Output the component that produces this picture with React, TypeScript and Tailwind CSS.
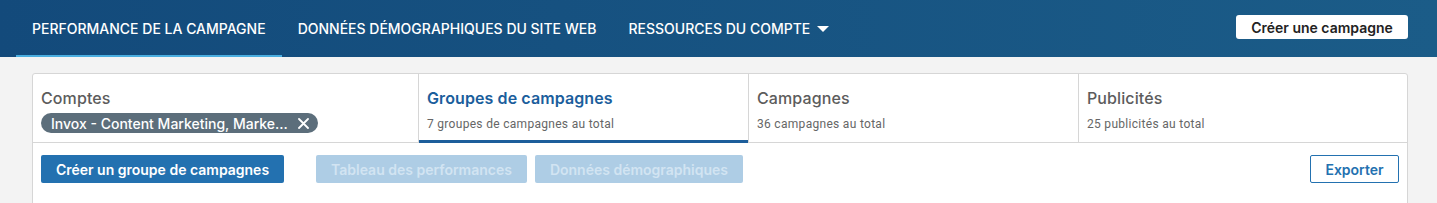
import React from "react";

const sans = { fontFamily: "Inter, 'Noto Sans', sans-serif" };

function Tab({
  title,
  sub,
  active,
  children,
  first,
}: {
  title: string;
  sub?: string;
  active?: boolean;
  children?: React.ReactNode;
  first?: boolean;
}) {
  return (
    <div
      className={`relative h-[69px] px-2 pt-[14px] border-b border-[#d6d6d6] ${first ? "" : "border-l"}`}
    >
      <div
        className={`text-[16px] leading-5 tracking-[0.1px] ${active ? "text-[#1b5e9c] font-semibold" : "text-[#5c5c5c] font-medium"}`}
      >
        {title}
      </div>
      {sub && (
        <div
          className="mt-[8px] text-[12px] leading-4 tracking-[0.3px] text-[#666666]"
          style={{ fontFamily: "Roboto, 'Noto Sans', sans-serif" }}
        >
          {sub}
        </div>
      )}
      {children}
      {active && <div className="absolute left-0 right-0 -bottom-px h-[3px] bg-[#1d5e9b]" />}
    </div>
  );
}

export default function App() {
  return (
    <div className="w-[1437px] h-[203px] overflow-hidden bg-[#f3f3f3]" style={sans}>
      <header className="h-[57px] flex items-stretch justify-between pl-4 pr-[29px] bg-gradient-to-r from-[#134a7b] to-[#1b5c88]">
        <nav className="flex items-stretch">
          <div className="relative flex items-center px-4 text-[14px] font-medium text-white">
            PERFORMANCE DE LA CAMPAGNE
            <div className="absolute left-0 right-0 bottom-0 h-[2px] bg-[#4aaee0]" />
          </div>
          <div className="flex items-center px-4 text-[14px] font-medium text-white">
            DONNÉES DÉMOGRAPHIQUES DU SITE WEB
          </div>
          <div className="flex items-center px-4 text-[14px] font-medium text-white">
            RESSOURCES DU COMPTE
            <svg width="12" height="7" viewBox="0 0 12 7" className="ml-[7px] mt-[2px]">
              <path d="M0 0 L12 0 L6 6 Z" fill="#ffffff" />
            </svg>
          </div>
        </nav>
        <div className="flex items-center">
          <button className="w-[172px] h-[24px] mt-[-3px] rounded-[3px] bg-white text-[14px] font-semibold text-[#222222]">
            Créer une campagne
          </button>
        </div>
      </header>

      <div className="ml-8 mr-[29px] mt-4 bg-white border border-[#d6d6d6] rounded-t-[3px]">
        <div className="grid grid-cols-[385px_330px_330px_1fr]">
          <Tab title="Comptes" first>
            <div className="mt-[5px] inline-flex items-center h-5 pl-[10px] pr-[9px] rounded-full bg-[#5c6e7b] text-white text-[14px] font-medium">
              <span>Invox - Content Marketing, Marke...</span>
              <svg width="11" height="11" viewBox="0 0 11 11" className="ml-[10px]">
                <path d="M1 1 L10 10 M10 1 L1 10" stroke="#ffffff" strokeWidth="1.8" strokeLinecap="round" />
              </svg>
            </div>
          </Tab>
          <Tab title="Groupes de campagnes" sub="7 groupes de campagnes au total" active />
          <Tab title="Campagnes" sub="36 campagnes au total" />
          <Tab title="Publicités" sub="25 publicités au total" />
        </div>
        <div className="flex items-start px-2 pt-3 h-[90px]">
          <button className="w-[243px] h-[28px] rounded-[2px] bg-[#2371b0] text-white text-[14px] font-semibold">
            Créer un groupe de campagnes
          </button>
          <button className="ml-8 w-[211px] h-[28px] rounded-[2px] bg-[#aecde5] text-[#d2e4f2] text-[14px] font-semibold">
            Tableau des performances
          </button>
          <button className="ml-2 w-[208px] h-[28px] rounded-[2px] bg-[#aecde5] text-[#d2e4f2] text-[14px] font-semibold">
            Données démographiques
          </button>
          <div className="flex-1" />
          <button className="w-[89px] h-[28px] rounded-[2px] border border-[#2371b0] bg-white text-[#2371b0] text-[14px] font-semibold">
            Exporter
          </button>
        </div>
      </div>
    </div>
  );
}
